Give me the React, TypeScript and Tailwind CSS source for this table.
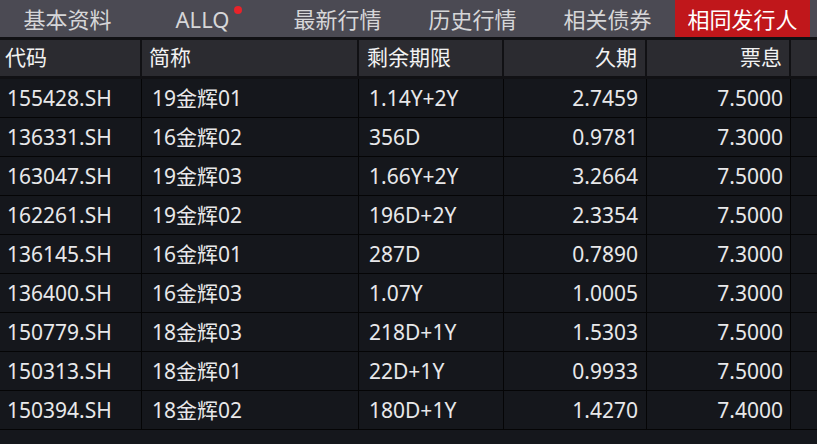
const tabs = ["基本资料", "ALLQ", "最新行情", "历史行情", "相关债券", "相同发行人"];

const rows = [
  ["155428.SH", "19金辉01", "1.14Y+2Y", "2.7459", "7.5000"],
  ["136331.SH", "16金辉02", "356D", "0.9781", "7.3000"],
  ["163047.SH", "19金辉03", "1.66Y+2Y", "3.2664", "7.5000"],
  ["162261.SH", "19金辉02", "196D+2Y", "2.3354", "7.5000"],
  ["136145.SH", "16金辉01", "287D", "0.7890", "7.3000"],
  ["136400.SH", "16金辉03", "1.07Y", "1.0005", "7.3000"],
  ["150779.SH", "18金辉03", "218D+1Y", "1.5303", "7.5000"],
  ["150313.SH", "18金辉01", "22D+1Y", "0.9933", "7.5000"],
  ["150394.SH", "18金辉02", "180D+1Y", "1.4270", "7.4000"],
];

const cols = "grid grid-cols-[142px_217px_145px_143px_144px_1fr]";

export default function App() {
  return (
    <div className="w-[817px] h-[444px] overflow-hidden bg-[#15171c] font-['Noto_Sans','Noto_Sans_CJK_SC',sans-serif]">
      {/* Tabs */}
      <div className="flex h-[40px] bg-[#4b4a53] border-b-[3px] border-[#111114]">
        {tabs.map((t, i) => {
          const active = i === tabs.length - 1;
          return (
            <div
              key={t}
              className={
                active
                  ? "w-[135px] flex items-center justify-center pt-[2px] text-[22px] text-white bg-[#c0171b]"
                  : "w-[135px] flex items-center justify-center pt-[2px] text-[22px] text-[#d6d6d8]"
              }
            >
              <span className="relative">
                {t}
                {t === "ALLQ" && (
                  <span className="absolute -right-[13px] top-[3px] w-[8px] h-[8px] rounded-full bg-[#e8232a]" />
                )}
              </span>
            </div>
          );
        })}
      </div>

      {/* Header */}
      <div className={`${cols} h-[39px] bg-[#2b2b30] border-b-[3px] border-[#111114] text-[21px] text-[#f2f2f2]`}>
        <div className="flex items-center pl-[5px] border-r-[2px] border-[#111114]">代码</div>
        <div className="flex items-center pl-[7px] border-r-[2px] border-[#111114]">简称</div>
        <div className="flex items-center pl-[8px] border-r-[2px] border-[#111114]">剩余期限</div>
        <div className="flex items-center justify-end pr-[8px] border-r-[2px] border-[#111114]">久期</div>
        <div className="flex items-center justify-end pr-[7px] border-r-[2px] border-[#111114]">票息</div>
        <div />
      </div>

      {/* Rows */}
      {rows.map((r) => (
        <div key={r[0]} className={`${cols} h-[39px] border-b border-[#050506] text-[21px] text-[#e8e8ea]`}>
          <div className="flex items-center pl-[7px] pt-[1px] border-r border-[#050506]">{r[0]}</div>
          <div className="flex items-center pl-[10px] pt-[1px] border-r border-[#050506]">{r[1]}</div>
          <div className="flex items-center pl-[10px] pt-[1px] border-r border-[#050506]">{r[2]}</div>
          <div className="flex items-center justify-end pr-[8px] pt-[1px] border-r border-[#050506]">{r[3]}</div>
          <div className="flex items-center justify-end pr-[7px] pt-[1px] border-r border-[#050506]">{r[4]}</div>
          <div />
        </div>
      ))}
    </div>
  );
}
